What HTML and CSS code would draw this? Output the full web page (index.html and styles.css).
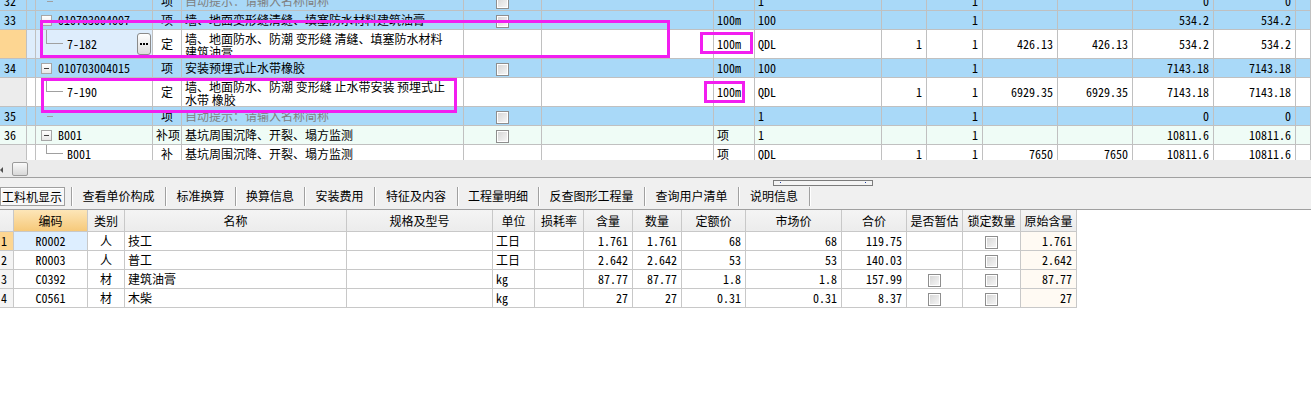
FILE: index.html
```html
<!DOCTYPE html>
<html lang="zh-CN">
<head>
<meta charset="utf-8">
<title>工料机显示</title>
<link rel="stylesheet" href="styles.css">
</head>
<body>
<div class="upper">
  <table class="grid top">
    <colgroup>
      <col style="width:27px"><col style="width:9px"><col style="width:117px"><col style="width:29px"><col style="width:282px"><col style="width:78px"><col style="width:172px"><col style="width:41px"><col style="width:127px"><col style="width:45px"><col style="width:56px"><col style="width:75px"><col style="width:75px"><col style="width:81px"><col style="width:82px"><col style="width:15px">
    </colgroup>
    <tr class="blue">
      <td class="rn mono">32</td><td></td>
      <td class="tc"><div class="tree"><span class="leaf"></span></div></td>
      <td class="c">项</td><td class="hint">自动提示：请输入名称简称</td>
      <td class="c"><span class="cb"></span></td><td></td><td></td>
      <td class="mono">1</td><td></td><td class="n mono">1</td><td></td><td></td>
      <td class="n mono">0</td><td class="n mono">0</td><td></td>
    </tr>
    <tr class="blue">
      <td class="rn mono">33</td><td></td>
      <td class="tc"><div class="tree"><span class="minus"></span><span class="mono">010703004007</span></div></td>
      <td class="c">项</td><td>墙、地面变形缝清缝、填塞防水材料建筑油膏</td>
      <td class="c"><span class="cb"></span></td><td></td>
      <td class="mono">100m</td><td class="mono">100</td><td></td><td class="n mono">1</td><td></td><td></td>
      <td class="n mono">534.2</td><td class="n mono">534.2</td><td></td>
    </tr>
    <tr class="tall">
      <td class="rn cur"></td><td class="curcell"></td>
      <td class="tc curcell"><div class="tree t2"><span class="elbow"></span><span class="mono">7-182</span><span class="more"><i></i><i></i><i></i></span></div></td>
      <td class="c">定</td><td class="two">墙、地面防水、防潮 变形缝 清缝、填塞防水材料<br>建筑油膏</td>
      <td></td><td></td>
      <td class="mono">100m</td><td class="mono">QDL</td><td class="n mono">1</td><td class="n mono">1</td>
      <td class="n mono">426.13</td><td class="n mono">426.13</td><td class="n mono">534.2</td><td class="n mono">534.2</td><td></td>
    </tr>
    <tr class="blue">
      <td class="rn mono">34</td><td></td>
      <td class="tc"><div class="tree"><span class="minus"></span><span class="mono">010703004015</span></div></td>
      <td class="c">项</td><td>安装预埋式止水带橡胶</td>
      <td class="c"><span class="cb"></span></td><td></td>
      <td class="mono">100m</td><td class="mono">100</td><td></td><td class="n mono">1</td><td></td><td></td>
      <td class="n mono">7143.18</td><td class="n mono">7143.18</td><td></td>
    </tr>
    <tr class="tall">
      <td class="rn"></td><td></td>
      <td class="tc"><div class="tree t2"><span class="elbow"></span><span class="mono">7-190</span></div></td>
      <td class="c">定</td><td class="two">墙、地面防水、防潮 变形缝 止水带安装 预埋式止<br>水带 橡胶</td>
      <td></td><td></td>
      <td class="mono">100m</td><td class="mono">QDL</td><td class="n mono">1</td><td class="n mono">1</td>
      <td class="n mono">6929.35</td><td class="n mono">6929.35</td><td class="n mono">7143.18</td><td class="n mono">7143.18</td><td></td>
    </tr>
    <tr class="blue">
      <td class="rn mono">35</td><td></td>
      <td class="tc"><div class="tree"><span class="leaf"></span></div></td>
      <td class="c">项</td><td class="hint">自动提示：请输入名称简称</td>
      <td class="c"><span class="cb"></span></td><td></td><td></td>
      <td class="mono">1</td><td></td><td class="n mono">1</td><td></td><td></td>
      <td class="n mono">0</td><td class="n mono">0</td><td></td>
    </tr>
    <tr class="mint">
      <td class="rn mono">36</td><td></td>
      <td class="tc"><div class="tree"><span class="minus"></span><span class="mono">B001</span></div></td>
      <td class="c">补项</td><td>基坑周围沉降、开裂、塌方监测</td>
      <td class="c"><span class="cb"></span></td><td></td>
      <td>项</td><td class="mono">1</td><td></td><td class="n mono">1</td><td></td><td></td>
      <td class="n mono">10811.6</td><td class="n mono">10811.6</td><td></td>
    </tr>
    <tr>
      <td class="rn"></td><td></td>
      <td class="tc"><div class="tree"><span class="elbow short"></span><span class="mono">B001</span></div></td>
      <td class="c">补</td><td>基坑周围沉降、开裂、塌方监测</td>
      <td></td><td></td>
      <td>项</td><td class="mono">QDL</td><td class="n mono">1</td><td class="n mono">1</td>
      <td class="n mono">7650</td><td class="n mono">7650</td><td class="n mono">10811.6</td><td class="n mono">10811.6</td><td></td>
    </tr>
  </table>
  <div class="mark m1"></div>
  <div class="mark m2"></div>
  <div class="mark m3"></div>
  <div class="mark m4"></div>
</div>

<div class="hscroll">
  <span class="arrow"></span>
  <span class="thumb"></span>
</div>

<div class="dock">
  <div class="grip"><i></i><i></i></div>
  <div class="tabrow">
    <span class="tab active">工料机显示</span>
    <span class="tab" style="width:94px">查看单价构成</span>
    <span class="tab" style="width:70px">标准换算</span>
    <span class="tab" style="width:69px">换算信息</span>
    <span class="tab" style="width:70px">安装费用</span>
    <span class="tab" style="width:83px">特征及内容</span>
    <span class="tab" style="width:81px">工程量明细</span>
    <span class="tab" style="width:106px">反查图形工程量</span>
    <span class="tab" style="width:94px">查询用户清单</span>
    <span class="tab" style="width:71px">说明信息</span>
    <span class="tab end"></span>
  </div>
</div>

<div class="lower">
  <table class="grid bottom">
    <colgroup>
      <col style="width:14px"><col style="width:74px"><col style="width:37px"><col style="width:222px"><col style="width:146px"><col style="width:42px"><col style="width:49px"><col style="width:49px"><col style="width:49px"><col style="width:64px"><col style="width:96px"><col style="width:65px"><col style="width:56px"><col style="width:58px"><col style="width:56px">
    </colgroup>
    <tr>
      <th></th><th class="sel">编码</th><th>类别</th><th>名称</th><th>规格及型号</th><th>单位</th><th>损耗率</th><th>含量</th><th>数量</th><th>定额价</th><th>市场价</th><th>合价</th><th>是否暂估</th><th>锁定数量</th><th>原始含量</th>
    </tr>
    <tr>
      <td class="rn cur mono">1</td><td class="c mono curcell">R0002</td><td class="c">人</td><td>技工</td><td></td><td>工日</td><td></td>
      <td class="n mono">1.761</td><td class="n mono">1.761</td><td class="n mono">68</td><td class="n mono">68</td><td class="n mono">119.75</td>
      <td></td><td class="c"><span class="cb"></span></td><td class="n mono orig">1.761</td>
    </tr>
    <tr>
      <td class="rn mono">2</td><td class="c mono">R0003</td><td class="c">人</td><td>普工</td><td></td><td>工日</td><td></td>
      <td class="n mono">2.642</td><td class="n mono">2.642</td><td class="n mono">53</td><td class="n mono">53</td><td class="n mono">140.03</td>
      <td></td><td class="c"><span class="cb"></span></td><td class="n mono orig">2.642</td>
    </tr>
    <tr>
      <td class="rn mono">3</td><td class="c mono">C0392</td><td class="c">材</td><td>建筑油膏</td><td></td><td class="mono">kg</td><td></td>
      <td class="n mono">87.77</td><td class="n mono">87.77</td><td class="n mono">1.8</td><td class="n mono">1.8</td><td class="n mono">157.99</td>
      <td class="c"><span class="cb"></span></td><td class="c"><span class="cb"></span></td><td class="n mono orig">87.77</td>
    </tr>
    <tr>
      <td class="rn mono">4</td><td class="c mono">C0561</td><td class="c">材</td><td>木柴</td><td></td><td class="mono">kg</td><td></td>
      <td class="n mono">27</td><td class="n mono">27</td><td class="n mono">0.31</td><td class="n mono">0.31</td><td class="n mono">8.37</td>
      <td class="c"><span class="cb"></span></td><td class="c"><span class="cb"></span></td><td class="n mono orig">27</td>
    </tr>
  </table>
</div>
</body>
</html>
```

FILE: styles.css
```css
* { box-sizing: border-box; }

html, body {
  margin: 0;
  padding: 0;
}

body {
  width: 1311px;
  height: 410px;
  overflow: hidden;
  background: #ffffff;
  color: #000000;
  font-family: "Noto Sans CJK SC", "Noto Sans", sans-serif;
  font-size: 12px;
}

.mono {
  font-family: "Noto Sans Mono CJK SC", "Liberation Mono", "Noto Sans CJK SC", monospace;
}

/* ---------- upper grid ---------- */
.upper {
  position: relative;
  height: 160px;
  overflow: hidden;
  background: #ffffff;
}

table.grid {
  border-collapse: separate;
  border-spacing: 0;
  table-layout: fixed;
}

.top {
  width: 1311px;
  margin-top: -8px;
}

.grid td {
  height: 19px;
  padding: 0 3px;
  border-right: 1px solid #c0c0c0;
  border-bottom: 1px solid #c0c0c0;
  white-space: nowrap;
  overflow: hidden;
  line-height: 14px;
  vertical-align: middle;
}

.top tr.tall td { height: 29px; }

.top tr.blue td { background: #a9d9f8; }
.top tr.mint td { background: #effcf6; }

.grid td.rn {
  background: #ececec;
  padding: 0 0 0 4px;
}
.grid td.rn.cur { background: #fdd692; }
.grid td.curcell { background: #deedfc; }

.grid td.n { text-align: right; padding-right: 4px; }
.grid td.c { text-align: center; }

td.hint { color: #7f7f7f; }

td.two {
  line-height: 13px;
  padding-top: 1px;
}

td.tc { padding: 0; }

.tree {
  display: flex;
  align-items: center;
  height: 18px;
}
.tree.t2 { height: 28px; }

.minus {
  position: relative;
  width: 11px;
  height: 11px;
  margin: 0 6px 0 5px;
  border: 1px solid #a6a6a6;
  background: linear-gradient(#ffffff, #e6e6e6);
  flex: none;
}
.minus::after {
  content: "";
  position: absolute;
  left: 2px;
  top: 4px;
  width: 5px;
  height: 1px;
  background: #404040;
}

.elbow {
  align-self: flex-start;
  flex: none;
  width: 17px;
  height: 14px;
  margin: 0 4px 0 10px;
  border-left: 1px solid #a0a0a0;
  border-bottom: 1px solid #a0a0a0;
}
.elbow.short { height: 9px; }

.leaf {
  width: 6px;
  height: 1px;
  margin-left: 11px;
  background: #a0a0a0;
}

.more {
  display: flex;
  align-items: center;
  justify-content: center;
  gap: 1px;
  margin-left: auto;
  margin-right: 1px;
  width: 14px;
  height: 22px;
  border: 1px solid #8a8a8a;
  border-radius: 3px;
  background: linear-gradient(#ffffff, #dcdcdc);
  flex: none;
}
.more i {
  width: 2px;
  height: 2px;
  background: #000;
}

.cb {
  display: inline-block;
  width: 13px;
  height: 13px;
  vertical-align: middle;
  border: 1px solid #8e8e8e;
  background: linear-gradient(135deg, #d4d4d4, #f8f8f8);
  box-shadow: inset 0 0 0 1px #ffffff;
}

.mark {
  position: absolute;
  border: 3px solid #f21ef0;
  pointer-events: none;
}
.m1 { left: 40px; top: 20px; width: 630px; height: 38px; }
.m2 { left: 41px; top: 78px; width: 416px; height: 35px; }
.m3 { left: 700px; top: 32px; width: 53px; height: 22px; }
.m4 { left: 704px; top: 81px; width: 41px; height: 22px; }

/* ---------- horizontal scrollbar ---------- */
.hscroll {
  height: 18px;
  background: #ebebeb;
  border-bottom: 1px solid #a0a0a0;
  display: flex;
  align-items: flex-start;
  padding-top: 2px;
}
.arrow {
  width: 0;
  height: 0;
  margin-top: 5px;
  border-top: 3px solid transparent;
  border-bottom: 3px solid transparent;
  border-right: 3px solid #505050;
}
.thumb {
  width: 16px;
  height: 14px;
  margin-left: 9px;
  border: 1px solid #9a9a9a;
  border-radius: 2px;
  background: linear-gradient(#fafafa, #d8d8d8);
}

/* ---------- tab dock ---------- */
.dock {
  height: 32px;
  background: #f0f0f0;
  border-bottom: 1px solid #a0a0a0;
  padding-top: 2px;
}
.grip {
  display: flex;
  justify-content: space-between;
  width: 100px;
  height: 6px;
  margin-left: 773px;
  padding: 1px 6px 0 6px;
  border: 1px solid #7c7c7c;
  background: #f4f4f4;
}
.grip i {
  width: 1px;
  height: 1px;
  background: #2040a0;
}
.tabrow {
  display: flex;
  height: 19px;
  margin-top: 1px;
}
.tab {
  display: block;
  height: 19px;
  line-height: 17px;
  text-align: center;
  border-left: 1px solid #a0a0a0;
  box-shadow: inset 1px 0 #ffffff;
  color: #000;
  white-space: nowrap;
}
.tab.active {
  width: 65px;
  margin-right: 6px;
  border: 1px solid #a0a0a0;
  background: #f7f7f7;
  box-shadow: inset 1px 1px #ffffff;
  text-align: left;
  padding-left: 1px;
}
.tab.end { width: 2px; }

/* ---------- lower grid ---------- */
.lower {
  background: #ffffff;
}
.bottom { width: 1077px; }
.bottom th {
  height: 22px;
  padding: 0 2px;
  font-weight: normal;
  background: linear-gradient(#f4f4f4, #ececec);
  border-right: 1px solid #c8c8c8;
  border-bottom: 1px solid #c8c8c8;
  white-space: nowrap;
  overflow: hidden;
}
.bottom th.sel { background: linear-gradient(#fde6b8, #f6c97a); }
.bottom td { border-color: #c8c8c8; }
.bottom td.rn { background: #f4f4f4; padding-left: 1px; }
.bottom td.rn.cur { background: #fdd692; }
.bottom td.orig { background: #fffaf3; }
.bottom td.curcell { background: #ddeeff; }
```
